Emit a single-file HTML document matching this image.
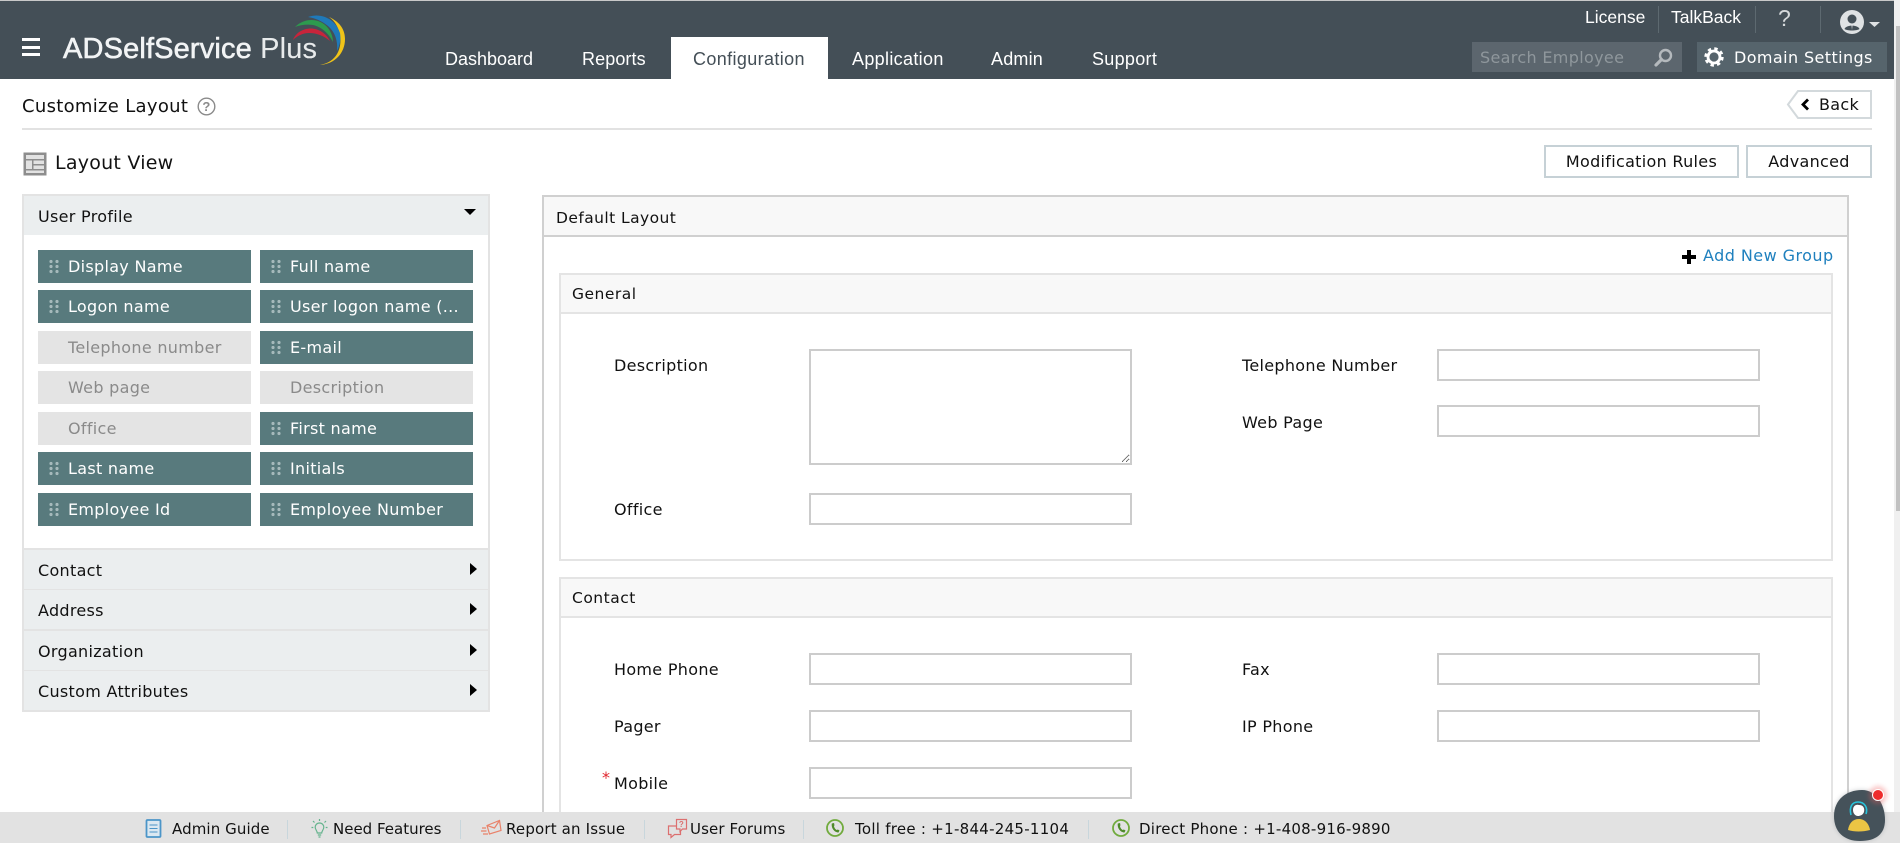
<!DOCTYPE html>
<html lang="en">
<head>
<meta charset="utf-8">
<title>Customize Layout - ADSelfService Plus</title>
<style>
html,body{margin:0;padding:0;width:1900px;height:843px;overflow:hidden;background:#fff}
body{position:relative;font:16px/20px "DejaVu Sans",sans-serif;color:#111;letter-spacing:.3px}
*{box-sizing:border-box}
.a,.t,svg.i{position:absolute}
.t{white-space:nowrap;height:20px;line-height:20px}
.h{font-family:"Liberation Sans",sans-serif;font-size:18px;color:#fff;letter-spacing:.2px}
.w{color:#fff}
.chip{position:absolute;width:213px;height:33px;background:#587a7d;color:#fff;line-height:34px;padding-left:30px;white-space:nowrap;font-size:16px}
.chip.off{background:#e4e4e4;color:#8a8a8a}
.chip:not(.off)::before{content:"";position:absolute;left:10px;top:9px;width:11px;height:15px;background:radial-gradient(circle at 50% 50%,#a5b9bb 1.5px,transparent 1.8px);background-size:6px 5px}
.acc{position:absolute;left:24px;width:464px;height:39px;background:#ebeeef;padding-left:14px;line-height:42px;white-space:nowrap}
.arr{position:absolute;left:446px;top:13px;width:0;height:0;border-left:7px solid #000;border-top:6px solid transparent;border-bottom:6px solid transparent}
input,textarea{position:absolute;display:block;margin:0;padding:0;background:#fff;border:2px solid #ccc;border-radius:0;outline:0}
input{height:32px}
.btn{position:absolute;background:#fff;border:2px solid #c6d1d6;text-align:center;line-height:30px;white-space:nowrap}
.sep{position:absolute;width:1px;background:#5d6970}
.fs{position:absolute;top:820px;width:1px;height:19px;background:#c8d6dc}
.f{top:819px;font-size:15px;color:#111;letter-spacing:.1px}
</style>
</head>
<body>

<!-- Header -->
<div class="a" style="left:0;top:0;width:1894px;height:1px;background:#c9c9c9"></div>
<div class="a" style="left:0;top:1px;width:1894px;height:78px;background:#444f57"></div>

<!-- Scrollbar -->
<div class="a" style="left:1894px;top:0;width:6px;height:843px;background:#f0f0f0"></div>
<div class="a" style="left:1896px;top:26px;width:4px;height:485px;background:#c1c1c1"></div>

<!-- Hamburger -->
<div class="a" style="left:22px;top:38px;width:18px;height:3px;background:#fff"></div>
<div class="a" style="left:22px;top:46px;width:18px;height:3px;background:#fff"></div>
<div class="a" style="left:22px;top:53px;width:18px;height:3px;background:#fff"></div>

<!-- Logo -->
<div class="t" style="left:63px;top:32px;height:34px;line-height:34px;font-family:'Liberation Sans',sans-serif;font-size:29px;color:#f2f4f5;-webkit-text-stroke:.6px #f2f4f5;letter-spacing:.15px">ADSelfService <span style="-webkit-text-stroke:.1px #e8ebec;color:#e8ebec">Plus</span></div>
<svg class="i" style="left:285px;top:10px" width="64" height="60" viewBox="285 10 64 60">
  <path d="M320 65C337 62 342 48 340 36C339 28 335 21 329 17C338 21 345 28 345 39C345 53 335 64 320 65Z" fill="#f0c419"/>
  <path d="M308 17C322 12 336 20 340 33C341 39 340 45 337 51C338 41 335 32 328 26C322 21 315 18 308 17Z" fill="#1f79b9"/>
  <path d="M295 27C305 17 320 18 328 28C331 32 333 37 333 42C329 34 322 27 313 25C307 24 300 25 295 27Z" fill="#2d9a4e"/>
  <path d="M293 40C297 29 312 25 322 32C325 34 328 37 330 41C324 36 317 33 309 33C303 33 297 36 293 40Z" fill="#c8243b"/>
</svg>

<!-- Nav -->
<div class="a" style="left:671px;top:37px;width:157px;height:42px;background:#fff"></div>
<div class="t h" style="left:445px;top:49px;letter-spacing:0">Dashboard</div>
<div class="t h" style="left:582px;top:49px;letter-spacing:.1px">Reports</div>
<div class="t h" style="left:693px;top:49px;color:#444f57;letter-spacing:.37px">Configuration</div>
<div class="t h" style="left:852px;top:49px;letter-spacing:.33px">Application</div>
<div class="t h" style="left:991px;top:49px;letter-spacing:.2px">Admin</div>
<div class="t h" style="left:1092px;top:49px;letter-spacing:.3px">Support</div>

<!-- Top right -->
<div class="t h" style="left:1585px;top:7px;font-size:17.5px;letter-spacing:0">License</div>
<div class="sep" style="left:1658px;top:6px;height:27px"></div>
<div class="t h" style="left:1671px;top:7px;font-size:17.5px;letter-spacing:0">TalkBack</div>
<div class="sep" style="left:1755px;top:6px;height:27px"></div>
<div class="t h" style="left:1778px;top:8px;font-size:23px;color:#d5d9db;letter-spacing:0">?</div>
<div class="sep" style="left:1820px;top:6px;height:27px"></div>
<svg class="i" style="left:1840px;top:10px" width="42" height="25" viewBox="0 0 42 25">
  <circle cx="12" cy="12" r="12" fill="#dfe2e4"/>
  <circle cx="12" cy="9" r="4.500" fill="#444f57"/>
  <path d="M4.500 19C6 14.500 18 14.500 19.500 19C17 21 7 21 4.500 19Z" fill="#444f57"/>
  <path d="M11.500 15.500L12 20L12.500 15.500Z" fill="#dfe2e4"/>
  <path d="M29 12H40L34.500 17Z" fill="#dfe2e4"/>
</svg>

<!-- Search -->
<div class="a" style="left:1472px;top:42px;width:210px;height:30px;background:#5c666e"></div>
<div class="t" style="left:1480px;top:48px;font-size:16px;color:#8f979c;letter-spacing:.33px">Search Employee</div>
<svg class="i" style="left:1654px;top:48px" width="19" height="19" viewBox="0 0 19 19">
  <circle cx="11.500" cy="7.500" r="5.500" fill="none" stroke="#b4b9bd" stroke-width="2.400"/>
  <path d="M7.500 11.500L2 17" stroke="#b4b9bd" stroke-width="3.200" stroke-linecap="round"/>
</svg>

<!-- Domain settings -->
<div class="a" style="left:1697px;top:42px;width:190px;height:30px;background:#56646c"></div>
<svg class="i" style="left:1704px;top:47px" width="20" height="20" viewBox="0 0 20 20">
  <circle cx="10" cy="10" r="6" fill="none" stroke="#fff" stroke-width="2.800"/>
  <circle cx="10" cy="10" r="8.400" fill="none" stroke="#fff" stroke-width="2.600" stroke-dasharray="3.400 3.200"/>
</svg>
<div class="t w" style="left:1734px;top:48px;font-size:16px;letter-spacing:.4px">Domain Settings</div>

<!-- Title row -->
<div class="t" style="left:22px;top:97px;font-size:18px;letter-spacing:.3px;color:#111">Customize Layout</div>
<svg class="i" style="left:197px;top:97px" width="19" height="19" viewBox="0 0 19 19">
  <circle cx="9.500" cy="9.500" r="8.300" fill="none" stroke="#8b8b8b" stroke-width="1.400"/>
  <text x="9.500" y="14" text-anchor="middle" font-family="Liberation Sans, sans-serif" font-size="13" font-weight="bold" fill="#8b8b8b">?</text>
</svg>
<svg class="i" style="left:1786px;top:89px" width="87" height="31" viewBox="0 0 87 31">
  <path d="M2 15.500L12 2H85V29H12Z" fill="#fff" stroke="#d3d9dc" stroke-width="2"/>
  <path d="M22 10.500L17 15.500L22 20.500" fill="none" stroke="#000" stroke-width="2.800"/>
</svg>
<div class="t" style="left:1819px;top:95px;font-size:16px">Back</div>
<div class="a" style="left:22px;top:128px;width:1850px;height:2px;background:#e2e2e2"></div>

<!-- Layout view row -->
<svg class="i" style="left:23px;top:152px" width="24" height="24" viewBox="0 0 24 24">
  <rect x=".5" y=".5" width="23" height="23" fill="#8d8d8d"/>
  <rect x="3" y="3" width="18" height="18" fill="#e2e2e2"/>
  <rect x="3" y="7" width="18" height="1.500" fill="#8d8d8d"/>
  <rect x="9" y="7" width="1.500" height="11" fill="#8d8d8d"/>
  <rect x="3" y="17" width="18" height="1.500" fill="#8d8d8d"/>
  <rect x="10.500" y="12" width="10.500" height="1.500" fill="#8d8d8d"/>
</svg>
<div class="t" style="left:55px;top:153px;font-size:19px;color:#111;letter-spacing:.25px">Layout View</div>
<div class="btn" style="left:1544px;top:145px;width:195px;height:33px">Modification Rules</div>
<div class="btn" style="left:1746px;top:145px;width:126px;height:33px">Advanced</div>

<!-- Left panel -->
<div class="a" style="left:22px;top:194px;width:468px;height:518px;border:2px solid #e3e3e3;background:#fff"></div>
<div class="acc" style="top:196px;line-height:41px">User Profile</div>
<div class="a" style="left:464px;top:209px;width:0;height:0;border-top:6px solid #000;border-left:6px solid transparent;border-right:6px solid transparent"></div>

<div class="chip" style="left:38px;top:250px">Display Name</div>
<div class="chip" style="left:260px;top:250px">Full name</div>
<div class="chip" style="left:38px;top:290px">Logon name</div>
<div class="chip" style="left:260px;top:290px">User logon name (...</div>
<div class="chip off" style="left:38px;top:331px">Telephone number</div>
<div class="chip" style="left:260px;top:331px">E-mail</div>
<div class="chip off" style="left:38px;top:371px">Web page</div>
<div class="chip off" style="left:260px;top:371px">Description</div>
<div class="chip off" style="left:38px;top:412px">Office</div>
<div class="chip" style="left:260px;top:412px">First name</div>
<div class="chip" style="left:38px;top:452px">Last name</div>
<div class="chip" style="left:260px;top:452px">Initials</div>
<div class="chip" style="left:38px;top:493px">Employee Id</div>
<div class="chip" style="left:260px;top:493px">Employee Number</div>

<div class="a" style="left:22px;top:548px;width:468px;height:2px;background:#e3e3e3"></div>
<div class="acc" style="top:550px">Contact<i class="arr"></i></div>
<div class="a" style="left:24px;top:589px;width:464px;height:1px;background:#e3e3e3"></div>
<div class="acc" style="top:590px">Address<i class="arr"></i></div>
<div class="a" style="left:24px;top:629px;width:464px;height:2px;background:#e3e3e3"></div>
<div class="acc" style="top:631px">Organization<i class="arr"></i></div>
<div class="a" style="left:24px;top:670px;width:464px;height:1px;background:#e3e3e3"></div>
<div class="acc" style="top:671px">Custom Attributes<i class="arr"></i></div>

<!-- Right panel -->
<div class="a" style="left:542px;top:195px;width:1307px;height:660px;border:2px solid #d0d0d0;background:#fff"></div>
<div class="a" style="left:544px;top:197px;width:1303px;height:40px;background:#f8f8f8;border-bottom:2px solid #d0d0d0"></div>
<div class="t" style="left:556px;top:208px;font-size:15.500px;letter-spacing:.43px">Default Layout</div>

<svg class="i" style="left:1682px;top:250px" width="14" height="14" viewBox="0 0 14 14"><path d="M5 0H9V5H14V9H9V14H5V9H0V5H5Z" fill="#000"/></svg>
<div class="t" style="left:1703px;top:246px;color:#1f80be;font-size:16px;letter-spacing:.45px">Add New Group</div>

<!-- General group -->
<div class="a" style="left:559px;top:273px;width:1274px;height:288px;border:2px solid #e4e4e4;background:#fff"></div>
<div class="a" style="left:561px;top:275px;width:1270px;height:39px;background:#f8f8f8;border-bottom:2px solid #e4e4e4"></div>
<div class="t" style="left:572px;top:284px;font-size:15.500px;letter-spacing:.5px">General</div>
<div class="t" style="left:614px;top:356px">Description</div>
<textarea style="left:809px;top:349px;width:323px;height:116px"></textarea>
<div class="t" style="left:614px;top:500px">Office</div>
<input style="left:809px;top:493px;width:323px">
<div class="t" style="left:1242px;top:356px">Telephone Number</div>
<input style="left:1437px;top:349px;width:323px">
<div class="t" style="left:1242px;top:413px">Web Page</div>
<input style="left:1437px;top:405px;width:323px">

<!-- Contact group -->
<div class="a" style="left:559px;top:577px;width:1274px;height:280px;border:2px solid #e4e4e4;background:#fff"></div>
<div class="a" style="left:561px;top:579px;width:1270px;height:39px;background:#f8f8f8;border-bottom:2px solid #e4e4e4"></div>
<div class="t" style="left:572px;top:588px;font-size:15.500px;letter-spacing:.5px">Contact</div>
<div class="t" style="left:614px;top:660px">Home Phone</div>
<input style="left:809px;top:653px;width:323px">
<div class="t" style="left:614px;top:717px">Pager</div>
<input style="left:809px;top:710px;width:323px">
<div class="t" style="left:602px;top:768px;color:#e0242c;font-size:16px">*</div>
<div class="t" style="left:614px;top:774px">Mobile</div>
<input style="left:809px;top:767px;width:323px">
<div class="t" style="left:1242px;top:660px">Fax</div>
<input style="left:1437px;top:653px;width:323px">
<div class="t" style="left:1242px;top:717px">IP Phone</div>
<input style="left:1437px;top:710px;width:323px">

<!-- Footer -->
<div class="a" style="left:0;top:812px;width:1900px;height:31px;background:#e2e2e2"></div>
<svg class="i" style="left:145px;top:819px" width="17" height="19" viewBox="0 0 17 19">
  <rect x="1.500" y="1" width="14" height="17" rx="1" fill="#dbe8f1" stroke="#4b95c8" stroke-width="1.800"/>
  <path d="M4.500 6H12.500M4.500 9.500H12.500M4.500 13H12.500" stroke="#4b95c8" stroke-width="1.100"/>
</svg>
<div class="t f" style="left:172px">Admin Guide</div>
<div class="fs" style="left:287px"></div>
<svg class="i" style="left:311px;top:818px" width="17" height="21" viewBox="0 0 17 21">
  <path d="M8.500 5C5.800 5 4.200 7 4.200 9.200C4.200 11.500 6 12.500 6.300 15H10.700C11 12.500 12.800 11.500 12.800 9.200C12.800 7 11.200 5 8.500 5Z" fill="none" stroke="#63b38c" stroke-width="1.200"/>
  <path d="M6.800 17H10.200M7.500 19H9.500M8.500 1V3M2 3L3.500 4.500M15 3L13.500 4.500M.5 9.500H2.300M16.500 9.500H14.700" stroke="#63b38c" stroke-width="1.200"/>
</svg>
<div class="t f" style="left:333px;letter-spacing:0">Need Features</div>
<div class="fs" style="left:460px"></div>
<svg class="i" style="left:481px;top:819px" width="21" height="19" viewBox="0 0 21 19">
  <path d="M6 6.500L18.500 1.500L20 11.500L8.500 15Z" fill="none" stroke="#e9826a" stroke-width="1.200"/>
  <path d="M6 6.500L13.500 9L18.500 1.500M1 9H5M0 12H5.500M2 15H7" fill="none" stroke="#e9826a" stroke-width="1.200"/>
</svg>
<div class="t f" style="left:506px;letter-spacing:.17px">Report an Issue</div>
<div class="fs" style="left:644px"></div>
<svg class="i" style="left:667px;top:818px" width="21" height="21" viewBox="0 0 21 21">
  <path d="M10 8H1.500V16.500H4V19.500L7.500 16.500H13.500V12" fill="none" stroke="#dc6f6f" stroke-width="1.200"/>
  <path d="M9.500 1.500H19.500V11H15.500L13 13.500V11H9.500Z" fill="#e2e2e2" stroke="#dc6f6f" stroke-width="1.200"/>
  <text x="14.500" y="9" text-anchor="middle" font-family="Liberation Sans, sans-serif" font-size="8" font-weight="bold" fill="#dc6f6f">?</text>
</svg>
<div class="t f" style="left:690px">User Forums</div>
<div class="fs" style="left:803px"></div>
<svg class="i" style="left:825px;top:818px" width="20" height="20" viewBox="0 0 20 20">
  <circle cx="10" cy="10" r="8" fill="none" stroke="#71ab3e" stroke-width="1.800"/>
  <path d="M6.800 5.500L9 5C9.500 6.500 9.500 7.500 9 8.500C9.500 10 10.200 11 11.500 12C12.500 11.500 13.200 11.500 14.500 12.500L13.500 14.500C9.500 14.500 6 10 6.800 5.500Z" fill="#4e8a2a"/>
</svg>
<div class="t f" style="left:855px;letter-spacing:.27px">Toll free : +1-844-245-1104</div>
<div class="fs" style="left:1088px"></div>
<svg class="i" style="left:1111px;top:818px" width="20" height="20" viewBox="0 0 20 20">
  <circle cx="10" cy="10" r="8" fill="none" stroke="#71ab3e" stroke-width="1.800"/>
  <path d="M6.800 5.500L9 5C9.500 6.500 9.500 7.500 9 8.500C9.500 10 10.200 11 11.500 12C12.500 11.500 13.200 11.500 14.500 12.500L13.500 14.500C9.500 14.500 6 10 6.800 5.500Z" fill="#4e8a2a"/>
</svg>
<div class="t f" style="left:1139px;letter-spacing:.24px">Direct Phone : +1-408-916-9890</div>

<!-- Chat widget -->
<svg class="i" style="left:1826px;top:782px" width="70" height="61" viewBox="1826 782 70 61">
  <defs><filter id="s" x="-30%" y="-30%" width="160%" height="160%"><feGaussianBlur stdDeviation="2.500"/></filter></defs>
  <path d="M1834 816C1834 800 1846 790 1862 790C1876 790 1885 804 1885 820C1885 834 1876 841 1860 841C1844 841 1834 832 1834 816Z" fill="#8a8f93" opacity=".45" filter="url(#s)"/>
  <path d="M1834 816C1834 800 1846 790 1862 790C1876 790 1885 804 1885 820C1885 834 1876 841 1860 841C1844 841 1834 832 1834 816Z" fill="#45525a"/>
  <path d="M1851 815C1849 807 1852 802 1858 802C1865 802 1868 808 1866 814" fill="none" stroke="#27c4dc" stroke-width="1.600"/>
  <path d="M1853 810C1853 806 1856 804 1859 805C1863 805 1865 808 1864 812C1863 815 1860 816 1858 816C1855 816 1853 813 1853 810Z" fill="#fff"/>
  <path d="M1848 830C1849 823 1853 819 1859 819C1865 819 1869 824 1870 830C1863 832 1854 832 1848 830Z" fill="#ecc544"/>
  <circle cx="1878" cy="795" r="9" fill="#f06060" opacity=".35" filter="url(#s)"/>
  <circle cx="1878" cy="795" r="5.500" fill="#ee2d2d" stroke="#fff" stroke-width="1"/>
</svg>

</body>
</html>
